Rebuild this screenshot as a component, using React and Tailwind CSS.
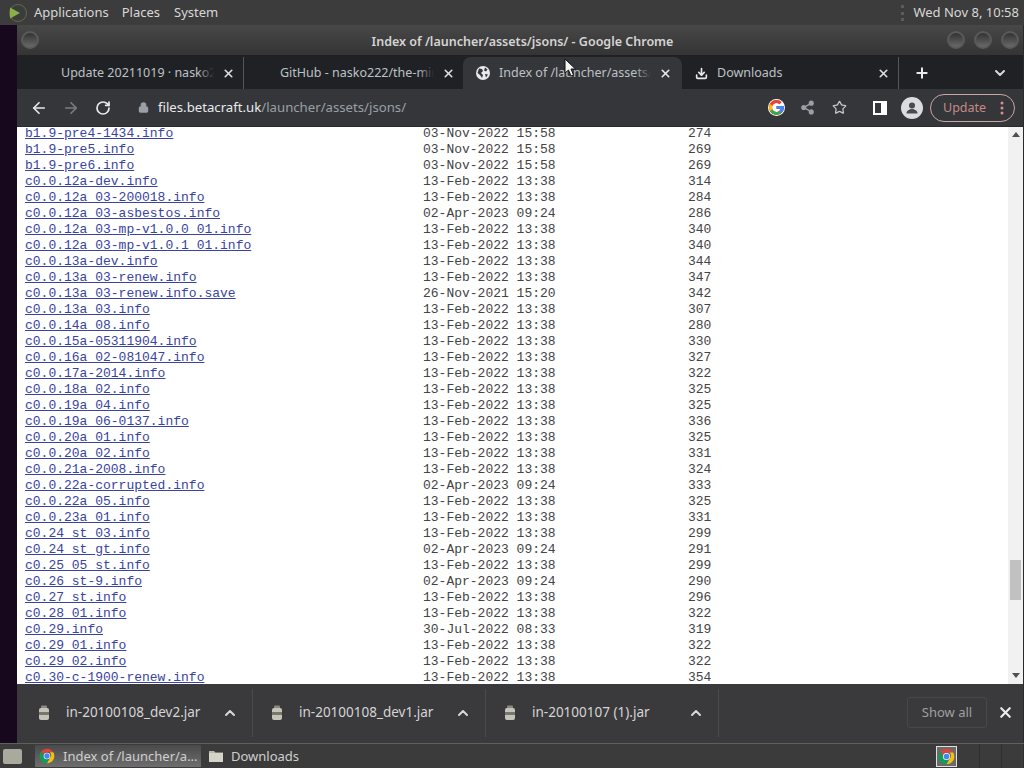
import React from 'react';
import { ArrowLeft, ArrowRight, RotateCw, Lock, Share2, Star, X, Plus, ChevronDown, ChevronUp, Download } from 'lucide-react';

const ui = { fontFamily: '"Noto Sans", sans-serif' };

const files = [
  ['b1.9-pre4-1434.info', '03-Nov-2022 15:58', '274'],
  ['b1.9-pre5.info', '03-Nov-2022 15:58', '269'],
  ['b1.9-pre6.info', '03-Nov-2022 15:58', '269'],
  ['c0.0.12a-dev.info', '13-Feb-2022 13:38', '314'],
  ['c0.0.12a_03-200018.info', '13-Feb-2022 13:38', '284'],
  ['c0.0.12a_03-asbestos.info', '02-Apr-2023 09:24', '286'],
  ['c0.0.12a_03-mp-v1.0.0_01.info', '13-Feb-2022 13:38', '340'],
  ['c0.0.12a_03-mp-v1.0.1_01.info', '13-Feb-2022 13:38', '340'],
  ['c0.0.13a-dev.info', '13-Feb-2022 13:38', '344'],
  ['c0.0.13a_03-renew.info', '13-Feb-2022 13:38', '347'],
  ['c0.0.13a_03-renew.info.save', '26-Nov-2021 15:20', '342'],
  ['c0.0.13a_03.info', '13-Feb-2022 13:38', '307'],
  ['c0.0.14a_08.info', '13-Feb-2022 13:38', '280'],
  ['c0.0.15a-05311904.info', '13-Feb-2022 13:38', '330'],
  ['c0.0.16a_02-081047.info', '13-Feb-2022 13:38', '327'],
  ['c0.0.17a-2014.info', '13-Feb-2022 13:38', '322'],
  ['c0.0.18a_02.info', '13-Feb-2022 13:38', '325'],
  ['c0.0.19a_04.info', '13-Feb-2022 13:38', '325'],
  ['c0.0.19a_06-0137.info', '13-Feb-2022 13:38', '336'],
  ['c0.0.20a_01.info', '13-Feb-2022 13:38', '325'],
  ['c0.0.20a_02.info', '13-Feb-2022 13:38', '331'],
  ['c0.0.21a-2008.info', '13-Feb-2022 13:38', '324'],
  ['c0.0.22a-corrupted.info', '02-Apr-2023 09:24', '333'],
  ['c0.0.22a_05.info', '13-Feb-2022 13:38', '325'],
  ['c0.0.23a_01.info', '13-Feb-2022 13:38', '331'],
  ['c0.24_st_03.info', '13-Feb-2022 13:38', '299'],
  ['c0.24_st_gt.info', '02-Apr-2023 09:24', '291'],
  ['c0.25_05_st.info', '13-Feb-2022 13:38', '299'],
  ['c0.26_st-9.info', '02-Apr-2023 09:24', '290'],
  ['c0.27_st.info', '13-Feb-2022 13:38', '296'],
  ['c0.28_01.info', '13-Feb-2022 13:38', '322'],
  ['c0.29.info', '30-Jul-2022 08:33', '319'],
  ['c0.29_01.info', '13-Feb-2022 13:38', '322'],
  ['c0.29_02.info', '13-Feb-2022 13:38', '322'],
  ['c0.30-c-1900-renew.info', '13-Feb-2022 13:38', '354'],
];

function ChromeIcon({ size = 16 }) {
  return (
    <svg width={size} height={size} viewBox="0 0 24 24" className="shrink-0">
      <path d="M12 1a11 11 0 0 1 9.5 5.5H12a5.5 5.5 0 0 0-5.2 3.7L3.3 5A11 11 0 0 1 12 1z" fill="#db4437" />
      <path d="M21.5 6.5A11 11 0 0 1 12 23l4.7-8.2a5.5 5.5 0 0 0-.5-8.3z" fill="#f4c20d" />
      <path d="M12 23A11 11 0 0 1 3.3 5l4.6 8.3a5.5 5.5 0 0 0 6 4l-2 5.7z" fill="#0f9d58" />
      <circle cx="12" cy="12" r="5" fill="#fff" />
      <circle cx="12" cy="12" r="4" fill="#4285f4" />
    </svg>
  );
}

function GoogleG() {
  return (
    <svg width="17" height="17" viewBox="0 0 48 48">
      <circle cx="24" cy="24" r="24" fill="#fff" />
      <path d="M43.6 20H24v8.5h11.3C33.7 33.4 29.300 36.500 24 36.500c-6.900 0-12.500-5.600-12.500-12.500S17.100 11.500 24 11.500c3.100 0 6 1.200 8.200 3.100l6-6C34.500 5.200 29.500 3 24 3 12.400 3 3 12.400 3 24s9.400 21 21 21 21-9.400 21-21c0-1.400-.1-2.700-.4-4z" fill="#ea4335" />
      <path d="M5.400 14.100l7 5.100C14.200 14.700 18.700 11.500 24 11.500c3.100 0 6 1.200 8.200 3.100l6-6C34.500 5.200 29.500 3 24 3 16 3 9 7.600 5.400 14.100z" fill="#ea4335" />
      <path d="M24 45c5.400 0 10.300-2.100 14-5.400l-6.500-5.500c-2 1.500-4.600 2.400-7.500 2.400-5.300 0-9.700-3.100-11.400-7.700l-7 5.400C9 41.200 16 45 24 45z" fill="#34a853" />
      <path d="M12.600 28.800c-.7-1.500-1.100-3.100-1.100-4.800s.4-3.300 1-4.800l-7.100-5.100C3.900 17 3 20.400 3 24s.9 7 2.500 10.200z" fill="#fbbc05" />
      <path d="M43.600 20H24v8.5h11.3c-.8 2.300-2 4.200-3.800 5.600l6.500 5.500C42.100 36 45 30.500 45 24c0-1.400-.1-2.700-.4-4z" fill="#4285f4" />
    </svg>
  );
}

function WindowButton() {
  return <div className="w-[18px] h-[18px] rounded-full border-2 border-[#5a5a5a] bg-gradient-to-b from-[#333] to-[#6a6a6a]" />;
}

function FadeText({ children, from = 'from-[#202124]' }) {
  return (
    <div className="relative flex-1 overflow-hidden whitespace-nowrap text-[12.500px] text-[#bdc1c6]">
      {children}
      <div className={`absolute right-0 top-0 bottom-0 w-4 bg-gradient-to-l ${from} to-transparent`} />
    </div>
  );
}

function Tab({ children, sep }) {
  return (
    <div className={`w-[219px] h-full flex items-center pr-[8px] ${sep ? 'border-r border-[#55565a]' : ''}`}>
      {children}
      <X size={13} strokeWidth={3} className="ml-[8px] text-[#e0e0e0] shrink-0" />
    </div>
  );
}

function JarIcon() {
  return (
    <svg width="12" height="16" viewBox="0 0 12 16" className="shrink-0">
      <rect x="3" y="0.500" width="6" height="3" rx="1" fill="#8a8a80" />
      <rect x="1" y="3" width="10" height="12" rx="2" fill="#c4c4b8" />
      <rect x="1" y="7" width="10" height="3" fill="#77776e" />
    </svg>
  );
}

function DownloadItem({ name }) {
  return (
    <div className="w-[233px] h-[48px] flex items-center pl-[18px] pr-[14px] border-r border-[#4b4b4d]">
      <JarIcon />
      <span className="ml-[16px] flex-1 text-[13.500px] text-[#d5d5d5] whitespace-nowrap">{name}</span>
      <ChevronUp size={16} strokeWidth={3} className="text-[#d8d8d8]" />
    </div>
  );
}

function FolderIcon() {
  return (
    <svg width="16" height="14" viewBox="0 0 16 14" className="shrink-0">
      <path d="M1 2h5l1.500 1.500H15V13H1z" fill="#b9b9ad" />
      <rect x="1" y="4" width="14" height="9" fill="#d4d4c8" />
    </svg>
  );
}

export default function App() {
  return (
    <div className="w-[1024px] h-[768px] flex flex-col overflow-hidden bg-[#3b3b3b]" style={ui}>
      {/* top panel */}
      <div className="h-[25px] shrink-0 flex items-center bg-[#3c3c3c] text-[13px] text-[#d8d8d8]">
        <svg width="20" height="20" viewBox="0 0 20 20" className="ml-[8px] shrink-0">
          <circle cx="10" cy="10" r="8.500" fill="none" stroke="#5f6a4a" strokeWidth="1" />
          <path d="M2 4.500 L12 10 L2 15.500z" fill="#8ab04a" />
        </svg>
        <span className="ml-[6px]">Applications</span>
        <span className="ml-[13px]">Places</span>
        <span className="ml-[14px]">System</span>
        <div className="ml-auto mr-[5px] flex items-center">
          <div className="w-[3px] h-[16px] mr-[9px] border-l-[3px] border-dotted border-[#5c5c5c]" />
          Wed Nov 8, 10:58
        </div>
      </div>

      <div className="flex-1 flex min-h-0">
        <div className="w-[17px] shrink-0 bg-[#17081e]" />
        {/* chrome window */}
        <div className="flex-1 flex flex-col min-w-0 relative">
          <div className="h-[30px] shrink-0 relative flex items-center justify-center pt-[4px] pl-[5px] bg-gradient-to-b from-[#484848] to-[#343434] text-[12.500px] font-semibold text-[#d4d4d4]">
            Index of /launcher/assets/jsons/ - Google Chrome
            <div className="absolute inset-0 flex items-center justify-between px-[4px]">
              <WindowButton />
              <div className="flex gap-[9px]">
                <WindowButton />
                <WindowButton />
                <WindowButton />
              </div>
            </div>
          </div>

          {/* tab strip */}
          <div className="h-[34px] shrink-0 flex items-center pt-[2px] bg-[#202124] pl-[8px]">
            <Tab sep>
              <div className="w-[36px] shrink-0" />
              <FadeText>Update 20211019 · nasko222</FadeText>
            </Tab>
            <Tab>
              <div className="w-[36px] shrink-0" />
              <FadeText>GitHub - nasko222/the-min</FadeText>
            </Tab>
            <div className="w-[219px] h-full flex items-center pr-[10px] pl-[13px] bg-[#35363a] rounded-t-[8px]">
              <svg width="14" height="14" viewBox="0 0 14 14" className="shrink-0 mr-[9px]">
                <circle cx="7" cy="7" r="7" fill="#e8eaed" />
                <path d="M3 2.500l3 .5 1 2-2 2 2 2-1 3-2-3-2.500-2zM9 1.500l2.500 2-1.500 2-2-1zM9 8l3 .5-2 3z" fill="#35363a" />
              </svg>
              <FadeText from="from-[#35363a]">Index of /launcher/assets/jsons/</FadeText>
              <X size={13} strokeWidth={3} className="ml-[8px] text-[#e8eaed] shrink-0" />
            </div>
            <div className="w-[217px] h-full flex items-center pr-[8px] pl-[13px] border-r border-[#55565a]">
              <Download size={13} strokeWidth={3} className="text-[#e8eaed] shrink-0 mr-[9px]" />
              <FadeText>Downloads</FadeText>
              <X size={13} strokeWidth={3} className="ml-[8px] text-[#e0e0e0] shrink-0" />
            </div>
            <Plus size={16} strokeWidth={3} className="ml-[15px] text-[#e8eaed]" />
            <ChevronDown size={16} strokeWidth={3} className="ml-[62px] text-[#d8d8d8]" />
          </div>

          {/* toolbar */}
          <div className="h-[38px] shrink-0 flex items-center bg-[#35363a] border-b border-[#2a2a2c] text-[#e8eaed]">
            <ArrowLeft size={18} strokeWidth={2.200} className="ml-[13px]" />
            <ArrowRight size={18} strokeWidth={2.200} className="ml-[14px] text-[#7c7d80]" />
            <RotateCw size={16} strokeWidth={2.600} className="ml-[15px]" />
            <Lock size={11} strokeWidth={2.500} fill="#9aa0a6" className="ml-[27px] text-[#9aa0a6]" />
            <div className="ml-[9px] text-[13.200px] whitespace-nowrap">
              files.betacraft.uk<span className="text-[#9aa0a6]">/launcher/assets/jsons/</span>
            </div>
            <div className="ml-auto flex items-center pr-[8px]">
              <GoogleG />
              <Share2 size={15} strokeWidth={2.200} fill="#9aa0a6" className="ml-[15px] text-[#9aa0a6]" />
              <Star size={15} strokeWidth={2} className="ml-[17px] text-[#c4c7ca]" />
              <div className="ml-[26px] w-[14px] h-[14px] border-2 border-white border-r-[6px]" />
              <div className="ml-[14px] w-[22px] h-[22px] rounded-full bg-[#dadce0] flex items-center justify-center overflow-hidden">
                <svg width="16" height="16" viewBox="0 0 16 16">
                  <circle cx="8" cy="5.500" r="3" fill="#4a4b4f" />
                  <path d="M2.500 13.500c0-3 3-4.500 5.500-4.500s5.500 1.500 5.500 4.500z" fill="#4a4b4f" />
                </svg>
              </div>
              <div className="ml-[7px] w-[85px] h-[28px] rounded-full border border-[#c9a5a0] flex items-center pl-[12px] text-[12.500px] text-[#c58a85]">
                <span className="mt-[1px]">Update</span>
                <svg width="4" height="14" viewBox="0 0 4 14" className="ml-[14px]">
                  <circle cx="2" cy="2" r="1.500" fill="#d98f88" />
                  <circle cx="2" cy="7" r="1.500" fill="#d98f88" />
                  <circle cx="2" cy="12" r="1.500" fill="#d98f88" />
                </svg>
              </div>
            </div>
          </div>

          {/* page */}
          <div className="flex-1 min-h-0 flex bg-white">
            <div className="flex-1 min-w-0 overflow-hidden pl-[8px]" style={{ fontFamily: '"Liberation Mono", monospace' }}>
              <div className="mt-[-1px]">
                {files.map(([name, date, size]) => (
                  <div key={name} className="flex h-[16px] leading-[16px] text-[13px] text-[#444] whitespace-pre">
                    <a href="#" className="w-[398px] shrink-0 text-[#38449f]"><span className="underline">{name}</span></a>
                    <span className="w-[265px] shrink-0">{date}</span>
                    <span>{size}</span>
                  </div>
                ))}
              </div>
            </div>
            {/* scrollbar */}
            <div className="w-[15px] shrink-0 bg-[#f1f1f1] flex flex-col items-center">
              <div className="mt-[5px] w-0 h-0 border-x-[4px] border-x-transparent border-b-[5px] border-b-[#505050]" />
              <div className="mt-[423px] w-[11px] h-[40px] bg-[#c1c1c1]" />
              <div className="mt-auto mb-[6px] w-0 h-0 border-x-[4px] border-x-transparent border-t-[5px] border-t-[#505050]" />
            </div>
          </div>

          {/* download shelf */}
          <div className="h-[59px] shrink-0 flex items-center pl-[3px] pb-[2px] bg-[#3a3a3c]">
            <DownloadItem name="in-20100108_dev2.jar" />
            <DownloadItem name="in-20100108_dev1.jar" />
            <DownloadItem name="in-20100107 (1).jar" />
            <div className="ml-auto mr-[36px] w-[80px] h-[31px] rounded-[3px] border border-[#48484a] flex items-center justify-center text-[13px] text-[#a0a0a0]">
              Show all
            </div>
          </div>
          <X size={17} strokeWidth={3} className="absolute right-[9px] bottom-[22px] text-[#ececec]" />

          {/* mouse pointer */}
          <svg width="12" height="19" viewBox="0 0 12 19" className="absolute left-[547px] top-[33px]">
            <path d="M1 1v14l3.500-3 2.500 6 2.500-1-2.500-6h4.500z" fill="#f5f5f5" stroke="#111" strokeWidth="1" />
          </svg>
        </div>
        <div className="w-px shrink-0 bg-[#2a2a2a]" />
      </div>

      {/* bottom panel */}
      <div className="h-[25px] shrink-0 flex items-center bg-[#3b3b3b] border-t border-[#5f5f5f] text-[13px] text-[#cfcfcf]">
        <div className="ml-[3px] w-[19px] h-[15px] bg-[#a9a99e] rounded-[2px] shrink-0" />
        <div className="ml-[13px] w-[166px] h-[22px] flex items-center pl-[4px] bg-gradient-to-b from-[#4a4a4a] to-[#6e6e6e]">
          <ChromeIcon size={16} />
          <span className="ml-[8px] mt-[1px] whitespace-nowrap">Index of /launcher/a...</span>
        </div>
        <div className="ml-[7px]"><FolderIcon /></div>
        <span className="ml-[7px] mt-[1px]">Downloads</span>
        <div className="ml-auto w-[21px] h-[21px] border border-[#e0e0e0] bg-[#6a6a6a] flex items-center justify-center">
          <ChromeIcon size={17} />
        </div>
        <div className="ml-[22px] w-px h-full bg-[#2f2f2f]" />
        <div className="ml-[21px] w-px h-full bg-[#2f2f2f]" />
        <div className="ml-[21px] w-px h-full bg-[#2f2f2f]" />
      </div>
    </div>
  );
}
